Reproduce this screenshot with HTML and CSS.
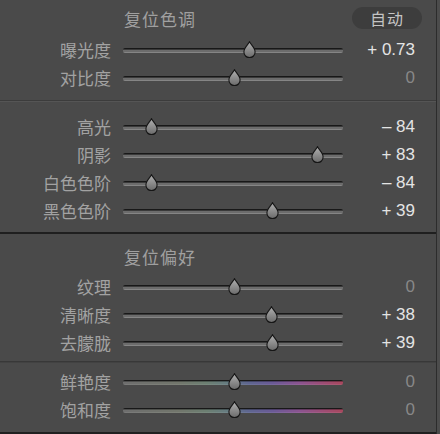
FILE: index.html
```html
<!DOCTYPE html>
<html lang="zh">
<head>
<meta charset="utf-8">
<link rel="stylesheet" href="styles.css">
</head>
<body>
<div class="panel">
  <section class="sec sec1">
    <div class="row head">
      <span></span>
      <span class="title">复位色调</span>
      <span class="auto">自动</span>
    </div>
    <div class="row"><span class="lbl">曝光度</span><div class="track"><svg class="thumb" style="left:126px" viewBox="0 0 12 16" width="13" height="17"><use href="#th"/></svg></div><span class="val">+ 0.73</span></div>
    <div class="row"><span class="lbl">对比度</span><div class="track"><svg class="thumb" style="left:111px" viewBox="0 0 12 16" width="13" height="17"><use href="#th"/></svg></div><span class="val zero">0</span></div>
  </section>
  <div class="div div1"></div>
  <section class="sec sec2">
    <div class="row"><span class="lbl">高光</span><div class="track"><svg class="thumb" style="left:28px" viewBox="0 0 12 16" width="13" height="17"><use href="#th"/></svg></div><span class="val">– 84</span></div>
    <div class="row"><span class="lbl">阴影</span><div class="track"><svg class="thumb" style="left:194px" viewBox="0 0 12 16" width="13" height="17"><use href="#th"/></svg></div><span class="val">+ 83</span></div>
    <div class="row"><span class="lbl">白色色阶</span><div class="track"><svg class="thumb" style="left:28px" viewBox="0 0 12 16" width="13" height="17"><use href="#th"/></svg></div><span class="val">– 84</span></div>
    <div class="row"><span class="lbl">黑色色阶</span><div class="track"><svg class="thumb" style="left:149px" viewBox="0 0 12 16" width="13" height="17"><use href="#th"/></svg></div><span class="val">+ 39</span></div>
  </section>
  <div class="div div2"></div>
  <section class="sec sec3">
    <div class="row head">
      <span></span>
      <span class="title">复位偏好</span>
      <span></span>
    </div>
    <div class="row"><span class="lbl">纹理</span><div class="track"><svg class="thumb" style="left:111px" viewBox="0 0 12 16" width="13" height="17"><use href="#th"/></svg></div><span class="val zero">0</span></div>
    <div class="row"><span class="lbl">清晰度</span><div class="track"><svg class="thumb" style="left:148px" viewBox="0 0 12 16" width="13" height="17"><use href="#th"/></svg></div><span class="val">+ 38</span></div>
    <div class="row"><span class="lbl">去朦胧</span><div class="track"><svg class="thumb" style="left:149px" viewBox="0 0 12 16" width="13" height="17"><use href="#th"/></svg></div><span class="val">+ 39</span></div>
  </section>
  <div class="div div3"></div>
  <section class="sec sec4">
    <div class="row"><span class="lbl">鲜艳度</span><div class="track color"><svg class="thumb" style="left:111px" viewBox="0 0 12 16" width="13" height="17"><use href="#th"/></svg></div><span class="val zero">0</span></div>
    <div class="row"><span class="lbl">饱和度</span><div class="track color"><svg class="thumb" style="left:111px" viewBox="0 0 12 16" width="13" height="17"><use href="#th"/></svg></div><span class="val zero">0</span></div>
  </section>
  <div class="div div4"></div>
</div>
<svg class="defs" width="0" height="0">
  <defs>
    <linearGradient id="tg" x1="0" y1="0" x2="0" y2="1">
      <stop offset="0" stop-color="#b0b0b0"/>
      <stop offset="1" stop-color="#6a6a6a"/>
    </linearGradient>
    <symbol id="th" viewBox="0 0 12 16">
      <path d="M6 0.8 C7.4 3.6 11.3 6.4 11.3 10.4 A5.3 5.3 0 0 1 0.7 10.4 C0.7 6.4 4.6 3.6 6 0.8 Z" fill="url(#tg)" stroke="#161616" stroke-width="1.1"/>
    </symbol>
  </defs>
</svg>
</body>
</html>
```
FILE: styles.css
```css
html, body {
  margin: 0;
  padding: 0;
  background: #4c4c4c;
}
body {
  width: 440px;
  height: 434px;
  overflow: hidden;
  font-family: "Noto Sans CJK SC", "Liberation Sans", sans-serif;
}
.panel {
  width: 436px;
  height: 434px;
  border-right: 1px solid #2c2c2c;
  background: #4a4a4a;
  display: flex;
  flex-direction: column;
}
.sec {
  display: flex;
  flex-direction: column;
}
.sec1 { padding: 4px 0 9px; }
.sec2 { padding: 10px 0 8px; }
.sec3 { padding: 8px 0 5px; }
.sec4 { padding: 4px 0 0; flex: 1; }
.sec1 .head { margin-bottom: 3px; }
.sec3 .head { margin-bottom: 2px; }
.row {
  display: grid;
  grid-template-columns: 111px 220px 60px;
  column-gap: 12px;
  align-items: center;
  height: 28px;
}
.lbl {
  text-align: right;
  font-size: 17px;
  color: #a2a2a2;
  line-height: 1;
  white-space: nowrap;
}
.title {
  font-size: 17px;
  letter-spacing: 1px;
  color: #a0a0a0;
  padding-left: 1px;
  line-height: 1;
}
.auto {
  justify-self: end;
  margin-right: -7px;
  width: 70px;
  height: 22px;
  border-radius: 11px;
  background: #3d3d3d;
  color: #c4c4c4;
  font-size: 16px;
  line-height: 22px;
  text-align: center;
  letter-spacing: 1px;
}
.track {
  position: relative;
  height: 5px;
  margin-top: 2px;
  border-radius: 2px;
  background: linear-gradient(#181818 0 1px, #3a3a3a 1px 2px, #6c6c6c 2px 4px, #858585 4px 5px);
}
.track.color {
  background:
    linear-gradient(#181818 0 1px, rgba(0,0,0,0.3) 1px 2px, rgba(0,0,0,0) 2px 4px, rgba(255,255,255,0.08) 4px 5px),
    linear-gradient(90deg, #6e6e6e 0%, #72766c 25%, #6c7f72 38%, #667c80 47%, #5e6690 57%, #6a5a96 68%, #8a5490 80%, #9e4c72 92%, #a8485e 100%);
}
.thumb {
  position: absolute;
  top: -7px;
  margin-left: -6.5px;
  display: block;
}
.val {
  text-align: right;
  font-family: "Liberation Sans", sans-serif;
  font-size: 17px;
  color: #e4e4e4;
  white-space: nowrap;
  line-height: 1;
}
.val.zero { color: #888888; }
.div { height: 2px; flex: none; }
.div1 { background: linear-gradient(#3c3c3c 0 1px, #555555 1px 2px); }
.div2 { background: #1f1f1f; }
.div3 { background: linear-gradient(#383838 0 1px, #424242 1px 2px); }
.div4 { background: #202020; margin-bottom: 0; }
.defs { position: absolute; width: 0; height: 0; }
```
